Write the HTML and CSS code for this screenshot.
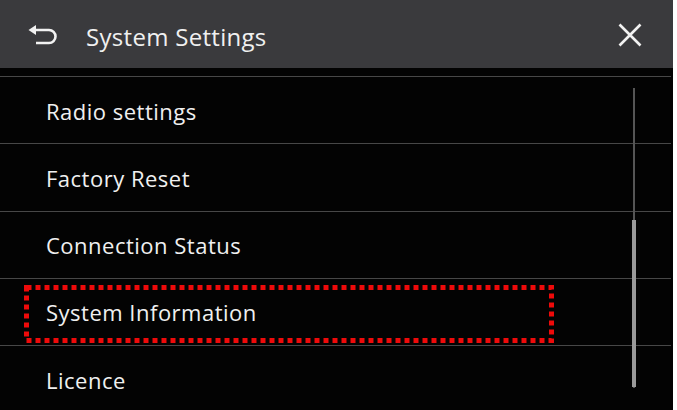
FILE: index.html
```html
<!DOCTYPE html>
<html>
<head>
<meta charset="utf-8">
<link rel="stylesheet" href="styles.css">
</head>
<body>
<div class="screen">
  <header class="header">
    <svg class="back" width="30" height="24" viewBox="0 0 30 24">
      <polygon points="0.5,7 8,2 8,12" fill="#f2f2f2"/>
      <path d="M7 7 H21 A6.5 6.5 0 0 1 21 20 H8" fill="none" stroke="#f2f2f2" stroke-width="2.6"/>
    </svg>
    <h1 class="title">System Settings</h1>
    <svg class="close" width="24" height="24" viewBox="0 0 24 24">
      <path d="M1.5 1.5 L22.5 22.5 M22.5 1.5 L1.5 22.5" stroke="#f2f2f2" stroke-width="2.6" fill="none"/>
    </svg>
  </header>
  <div class="list">
    <div class="row">Radio settings</div>
    <div class="row">Factory Reset</div>
    <div class="row">Connection Status</div>
    <div class="row selected">System Information
      <svg class="marker" width="530" height="58" viewBox="0 0 530 58">
        <rect x="2.5" y="2.5" width="525" height="53" fill="none" stroke="#ee0a0a" stroke-width="5" stroke-dasharray="5 4"/>
      </svg>
    </div>
    <div class="row">Licence</div>
    <div class="track"></div>
    <div class="thumb"></div>
  </div>
</div>
</body>
</html>
```
FILE: styles.css
```css
html, body {
  margin: 0;
  padding: 0;
  background: #ffffff;
}
.screen {
  width: 673px;
  height: 410px;
  background: #030303;
  overflow: hidden;
  font-family: "Open Sans", "Noto Sans", sans-serif;
  color: #f0f0f0;
}
.header {
  height: 68px;
  background: #3a3a3d;
  display: flex;
  align-items: center;
  padding-left: 28px;
  padding-right: 31px;
  padding-top: 4px;
  box-sizing: border-box;
}
.back {
  display: block;
  margin-top: -2px;
}
.title {
  margin: 0 0 0 28px;
  font-size: 24px;
  font-weight: 400;
  flex: 1;
  letter-spacing: 0.3px;
}
.close {
  display: block;
  margin-top: -2px;
}
.list {
  position: relative;
  padding-top: 8px;
}
.row {
  position: relative;
  height: 67.25px;
  box-sizing: border-box;
  border-top: 1px solid #474747;
  display: flex;
  align-items: center;
  padding-left: 46px;
  padding-top: 1px;
  font-size: 22px;
  letter-spacing: 0.5px;
  margin-right: 2px;
}
.marker {
  position: absolute;
  left: 24px;
  top: 6px;
}
.track {
  position: absolute;
  left: 633px;
  top: 20px;
  width: 2px;
  height: 300px;
  background: #555;
}
.thumb {
  position: absolute;
  left: 632px;
  top: 152px;
  width: 4px;
  height: 167px;
  background: #9a9a9a;
}
```
